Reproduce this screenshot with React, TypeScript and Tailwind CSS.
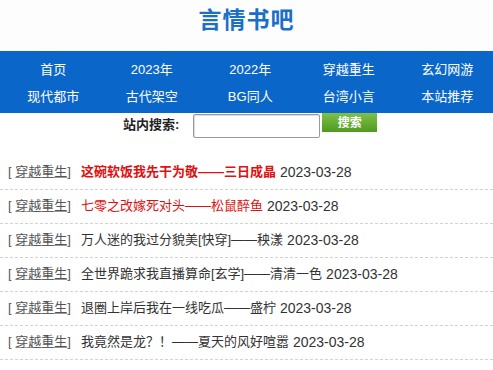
import React from "react";

const nav1 = ["首页", "2023年", "2022年", "穿越重生", "玄幻网游"];
const nav2 = ["现代都市", "古代架空", "BG同人", "台湾小言", "本站推荐"];

const items: { title: string; red?: boolean; bold?: boolean }[] = [
  { title: "这碗软饭我先干为敬——三日成晶", red: true, bold: true },
  { title: "七零之改嫁死对头——松鼠醉鱼", red: true },
  { title: "万人迷的我过分貌美[快穿]——秧漾" },
  { title: "全世界跪求我直播算命[玄学]——清清一色" },
  { title: "退圈上岸后我在一线吃瓜——盛柠" },
  { title: "我竟然是龙？！——夏天的风好喧嚣" },
];

export default function App() {
  return (
    <div
      className="w-[493px] h-[370px] overflow-hidden bg-white"
      style={{ fontFamily: '"Liberation Sans", "Noto Sans CJK SC", sans-serif' }}
    >
      <div className="h-[51px] flex items-center justify-center bg-[#fdfdfe]">
        <h1 className="text-[23px] font-bold text-[#1a6fc8] tracking-[1px] leading-none -mt-[10px]">言情书吧</h1>
      </div>
      <div className="h-[62px] bg-[#0a67c9] pl-1 pt-[8px]">
        <div className="grid grid-cols-[repeat(5,98.5px)] text-[13px] text-white leading-none">
          {nav1.map((n) => (
            <div key={n} className="text-center h-[21px] flex items-center justify-center">{n}</div>
          ))}
        </div>
        <div className="grid grid-cols-[repeat(5,98.5px)] text-[13px] text-white leading-none mt-[6px]">
          {nav2.map((n) => (
            <div key={n} className="text-center h-[21px] flex items-center justify-center">{n}</div>
          ))}
        </div>
      </div>
      <div className="flex items-start h-[26px] mt-[1px]">
        <span className="ml-[123px] mt-[4px] text-[13px] font-bold text-[#222] leading-none">站内搜索:</span>
        <input className="ml-[14px] w-[127px] h-[24px] border border-[#9a9a9a] rounded-[2px] bg-white shadow-[inset_1px_1px_1px_rgba(0,0,0,0.15)]" />
        <button className="ml-[2px] w-[55px] h-[19px] -mt-[1px] bg-gradient-to-b from-[#7fc04a] to-[#4f9a1c] text-white text-[12px] font-bold leading-none">
          搜索
        </button>
      </div>
      <div className="mt-[16px]">
        {items.map((it, i) => (
          <div
            key={i}
            className="h-[34px] flex items-center pl-[8px] border-b border-dashed border-[#d2d2d2] text-[13px] leading-none whitespace-nowrap pb-[2px]"
          >
            <span className="text-[#555]">
              [ <span className="underline decoration-[#999]">穿越重生</span>]
            </span>
            <span
              className={
                "ml-[10px] " +
                (it.red ? "text-[#e01010] " : "text-[#333] ") +
                (it.bold ? "font-bold" : "")
              }
            >
              {it.title}
            </span>
            <span className="ml-[4px] text-[#333] text-[14px]">2023-03-28</span>
          </div>
        ))}
      </div>
    </div>
  );
}
